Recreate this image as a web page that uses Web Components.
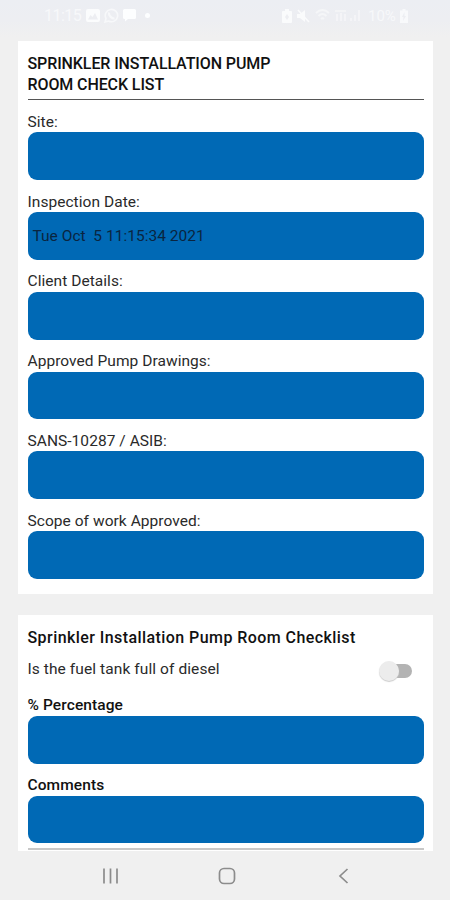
<!DOCTYPE html>
<html lang="en">
<head>
<meta charset="UTF-8">
<meta name="viewport" content="width=device-width, initial-scale=1.0">
<title>Pump Room Check List</title>
<style>
    body {
        margin: 0;
        background: #f0f0f0;
        font-family: Roboto, "Liberation Sans", sans-serif;
        color: #2a2a2a;
        overflow: hidden;
    }
</style>
</head>
<body>
<check-app>
    <status-bar slot="top" time="11:15" battery="10%"></status-bar>
    <form-card>
        <card-title lined>SPRINKLER INSTALLATION PUMP<br>ROOM CHECK LIST</card-title>
        <form-field label="Site:"></form-field>
        <form-field label="Inspection Date:" value="Tue Oct  5 11:15:34 2021"></form-field>
        <form-field label="Client Details:"></form-field>
        <form-field label="Approved Pump Drawings:"></form-field>
        <form-field label="SANS-10287 / ASIB:"></form-field>
        <form-field label="Scope of work Approved:"></form-field>
    </form-card>
    <form-card>
        <card-title>Sprinkler Installation Pump Room Checklist</card-title>
        <switch-row>Is the fuel tank full of diesel</switch-row>
        <form-field strong label="% Percentage"></form-field>
        <form-field strong label="Comments"></form-field>
        <card-divider></card-divider>
    </form-card>
    <nav-bar slot="bottom"></nav-bar>
</check-app>

<script>
// Shared base: every component only has to return its template
class BaseElement extends HTMLElement {
    constructor() {
        super();
        this.attachShadow({ mode: "open" });
    }

    render() {
        const template = document.createElement("template");
        template.innerHTML = `${this.getStyles()}${this.getTemplate()}`;
        this.shadowRoot.replaceChildren(template.content.cloneNode(true));
    }

    connectedCallback() {
        this.render();
    }
}

class CheckApp extends BaseElement {
    getTemplate() {
        return `
            <slot name="top"></slot>
            <main><slot></slot></main>
            <slot name="bottom"></slot>
        `;
    }

    getStyles() {
        return `
            <style>
                :host {
                    display: grid;
                    grid-template-rows: 41px 810px 49px;
                    height: 900px;
                }
                main {
                    display: flex;
                    flex-direction: column;
                    gap: 21px;
                    padding: 0 17px 0 18px;
                    overflow: hidden;
                }
            </style>
        `;
    }
}
customElements.define("check-app", CheckApp);

class StatusBar extends BaseElement {
    getTemplate() {
        return `
            <div class="group left">
                <span class="time">${this.getAttribute("time")}</span>
                <svg width="14" height="13" viewBox="0 0 14 13">
                    <path fill="#fbfcfd" fill-rule="evenodd" d="M2 0h10a2 2 0 0 1 2 2v9a2 2 0 0 1-2 2H2a2 2 0 0 1-2-2V2a2 2 0 0 1 2-2zM2 10.500h10L9 4 6.500 8 4.500 6z"/>
                </svg>
                <svg width="15" height="15" viewBox="0 0 15 15" fill="none" stroke="#f7f8fa" stroke-width="1.600">
                    <path d="M1 14l1-3.500A6.200 6.200 0 1 1 4.500 13z"/>
                    <path d="M5 4.500c-.5 3 2.500 6 5.500 6" stroke-width="2.200"/>
                </svg>
                <svg width="13" height="13" viewBox="0 0 13 13">
                    <path fill="#fdfeff" d="M1.500 0h10A1.500 1.500 0 0 1 13 1.500v7a1.500 1.500 0 0 1-1.500 1.500H5l-3 2.500V10H1.500A1.500 1.500 0 0 1 0 8.500v-7A1.500 1.500 0 0 1 1.500 0z"/>
                </svg>
                <i></i>
            </div>
            <div class="group right">
                <svg width="10" height="14" viewBox="0 0 10 14">
                    <path fill="#fafbfc" fill-rule="evenodd" d="M3 0h4v2h2q1 0 1 1v10q0 1-1 1H1q-1 0-1-1V3q0-1 1-1h2zM3 8l2-3 2 3-2 3z"/>
                </svg>
                <svg width="13" height="14" viewBox="0 0 13 14">
                    <path fill="#fafbfc" d="M0 5h3l5-4v12L3 9H0z"/>
                    <path stroke="#fafbfc" stroke-width="1.500" d="M1 1l11 12"/>
                </svg>
                <svg width="15" height="13" viewBox="0 0 15 13" fill="none" stroke="#f5f6f8" stroke-width="1.800">
                    <path d="M1 4q6.500-6 13 0M3.500 7q4-4 8 0M6 10q1.500-1.500 3 0"/>
                </svg>
                <svg width="28" height="13" viewBox="0 0 28 13" fill="none" stroke="#f5f6f8" stroke-width="1.600">
                    <path d="M0 2h11M2 5v7M6 4v8M10 5v7M16 9v3M20 6v6M24 1v11"/>
                </svg>
                <span class="battery">${this.getAttribute("battery")}</span>
                <svg width="8" height="14" viewBox="0 0 8 14">
                    <path fill="#f8f9fb" fill-rule="evenodd" d="M2.500 0h3v1.500H8V14H0V1.500h2.500zM4.500 3L2 8h1.500l-.5 4L6 7H4.500z"/>
                </svg>
            </div>
        `;
    }

    getStyles() {
        return `
            <style>
                :host {
                    display: flex;
                    justify-content: space-between;
                    box-sizing: border-box;
                    height: 41px;
                    padding: 5px 42px 15px 44px;
                    background: linear-gradient(#eceef3, #edeef2 50%, #f0f0f0 90%);
                    color: #f7f8fa;
                    font-size: 16px;
                }
                .group {
                    display: flex;
                    align-items: center;
                }
                .left { gap: 4px; }
                .right { gap: 5px; }
                .time {
                    width: 37px;
                    margin-right: 1px;
                    letter-spacing: -0.500px;
                }
                .battery { width: 27px; font-size: 15px; }
                svg { display: block; }
                i {
                    width: 5px;
                    height: 5px;
                    margin-left: 5px;
                    border-radius: 50%;
                    background: #fdfeff;
                }
            </style>
        `;
    }
}
customElements.define("status-bar", StatusBar);

class FormCard extends BaseElement {
    getTemplate() {
        return `<slot></slot>`;
    }

    getStyles() {
        return `
            <style>
                :host {
                    display: block;
                    flex: none;
                    padding: 12px 9.500px 14.700px;
                    background: #fff;
                }
            </style>
        `;
    }
}
customElements.define("form-card", FormCard);

class CardTitle extends BaseElement {
    getTemplate() {
        return `<slot></slot>`;
    }

    getStyles() {
        return `
            <style>
                :host {
                    display: block;
                    color: #111;
                    font-size: 16px;
                    font-weight: 500;
                    line-height: 22px;
                    letter-spacing: 0.430px;
                    white-space: nowrap;
                }
                :host([lined]) {
                    line-height: 21px;
                    padding-bottom: 4px;
                    margin-bottom: 0.300px;
                    border-bottom: 1px solid #555;
                    letter-spacing: -0.100px;
                }
            </style>
        `;
    }
}
customElements.define("card-title", CardTitle);

class FormField extends BaseElement {
    getTemplate() {
        return `
            <label>${this.getAttribute("label")}</label>
            <div class="box">${this.getAttribute("value") || ""}</div>
        `;
    }

    getStyles() {
        return `
            <style>
                :host {
                    display: grid;
                    grid-template-rows: 32px 47.800px;
                    font-size: 15.500px;
                    letter-spacing: 0.050px;
                }
                label {
                    align-self: end;
                    line-height: 19.500px;
                }
                :host([strong]) label {
                    color: #111;
                    font-weight: 500;
                    letter-spacing: 0.100px;
                }
                .box {
                    display: flex;
                    align-items: center;
                    padding-left: 5px;
                    border-radius: 9px;
                    background: #0069b5;
                    color: #0a2540;
                    letter-spacing: 0.020px;
                    white-space: pre;
                }
            </style>
        `;
    }
}
customElements.define("form-field", FormField);

class SwitchRow extends BaseElement {
    getTemplate() {
        return `
            <span><slot></slot></span>
            <div class="track"><div class="thumb"></div></div>
        `;
    }

    getStyles() {
        return `
            <style>
                :host {
                    display: flex;
                    align-items: center;
                    justify-content: space-between;
                    box-sizing: border-box;
                    height: 35px;
                    padding: 9px 11.500px 0 0;
                    font-size: 15.500px;
                    letter-spacing: 0.090px;
                }
                span { margin-top: -3px; }
                .track {
                    display: flex;
                    align-items: center;
                    width: 31px;
                    height: 14px;
                    border-radius: 7px;
                    background: #b3b3b3;
                }
                .thumb {
                    flex: none;
                    width: 20px;
                    height: 20px;
                    margin-left: -2px;
                    border-radius: 50%;
                    background: #ececec;
                    box-shadow: 0 1px 1px #ccc;
                }
            </style>
        `;
    }
}
customElements.define("switch-row", SwitchRow);

class CardDivider extends BaseElement {
    getTemplate() {
        return ``;
    }

    getStyles() {
        return `
            <style>
                :host {
                    display: block;
                    height: 2px;
                    margin-top: 5px;
                    background: #c8c8c8;
                }
            </style>
        `;
    }
}
customElements.define("card-divider", CardDivider);

class NavBar extends BaseElement {
    getTemplate() {
        return `
            <svg width="18" height="18" viewBox="0 0 18 18"><path d="M2 1.500v15M8.500 1.500v15M15 1.500v15"/></svg>
            <svg width="18" height="18" viewBox="0 0 18 18"><rect x="1.500" y="1.500" width="15" height="15" rx="4.500"/></svg>
            <svg width="18" height="18" viewBox="0 0 18 18"><path d="M13.500 2L6 9l7.500 7"/></svg>
        `;
    }

    getStyles() {
        return `
            <style>
                :host {
                    display: flex;
                    justify-content: space-between;
                    padding: 16px 98.500px 0 101.500px;
                    background: #f0f0f0;
                }
                svg {
                    fill: none;
                    stroke: #8c8c8c;
                    stroke-width: 1.700;
                }
            </style>
        `;
    }
}
customElements.define("nav-bar", NavBar);
</script>
</body>
</html>
